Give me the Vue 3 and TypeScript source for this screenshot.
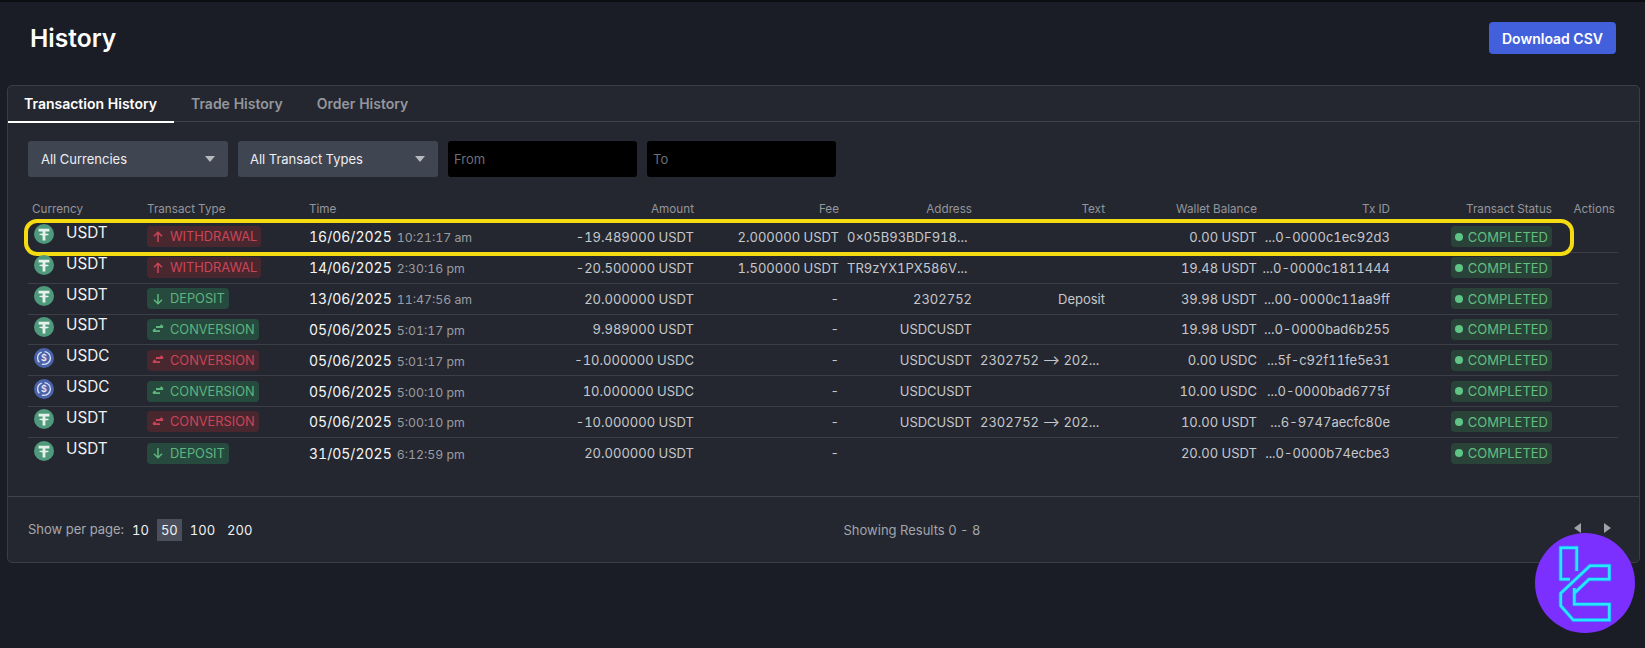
<script setup lang="ts">
type Row = {
  coin: 'USDT' | 'USDC'
  kind: 'WITHDRAWAL' | 'DEPOSIT' | 'CONVERSION'
  tone: 'red' | 'green'
  date: string
  time: string
  amount: string
  fee: string
  address: string
  addressLeft?: boolean
  text: string
  textLeft?: boolean
  balance: string
  tx: string
}
const rows: Row[] = [
  { coin: 'USDT', kind: 'WITHDRAWAL', tone: 'red', date: '16/06/2025', time: '10:21:17 am', amount: '-19.489000 USDT', fee: '2.000000 USDT', address: '0×05B93BDF918...', addressLeft: true, text: '', balance: '0.00 USDT', tx: '...0-0000c1ec92d3' },
  { coin: 'USDT', kind: 'WITHDRAWAL', tone: 'red', date: '14/06/2025', time: '2:30:16 pm', amount: '-20.500000 USDT', fee: '1.500000 USDT', address: 'TR9zYX1PX586V...', addressLeft: true, text: '', balance: '19.48 USDT', tx: '...0-0000c1811444' },
  { coin: 'USDT', kind: 'DEPOSIT', tone: 'green', date: '13/06/2025', time: '11:47:56 am', amount: '20.000000 USDT', fee: '-', address: '2302752', text: 'Deposit', balance: '39.98 USDT', tx: '...00-0000c11aa9ff' },
  { coin: 'USDT', kind: 'CONVERSION', tone: 'green', date: '05/06/2025', time: '5:01:17 pm', amount: '9.989000 USDT', fee: '-', address: 'USDCUSDT', text: '', balance: '19.98 USDT', tx: '...0-0000bad6b255' },
  { coin: 'USDC', kind: 'CONVERSION', tone: 'red', date: '05/06/2025', time: '5:01:17 pm', amount: '-10.000000 USDC', fee: '-', address: 'USDCUSDT', text: '2302752 ⟶ 202...', textLeft: true, balance: '0.00 USDC', tx: '...5f-c92f11fe5e31' },
  { coin: 'USDC', kind: 'CONVERSION', tone: 'green', date: '05/06/2025', time: '5:00:10 pm', amount: '10.000000 USDC', fee: '-', address: 'USDCUSDT', text: '', balance: '10.00 USDC', tx: '...0-0000bad6775f' },
  { coin: 'USDT', kind: 'CONVERSION', tone: 'red', date: '05/06/2025', time: '5:00:10 pm', amount: '-10.000000 USDT', fee: '-', address: 'USDCUSDT', text: '2302752 ⟶ 202...', textLeft: true, balance: '10.00 USDT', tx: '...6-9747aecfc80e' },
  { coin: 'USDT', kind: 'DEPOSIT', tone: 'green', date: '31/05/2025', time: '6:12:59 pm', amount: '20.000000 USDT', fee: '-', address: '', text: '', balance: '20.00 USDT', tx: '...0-0000b74ecbe3' },
]
const headers = ['Currency', 'Transact Type', 'Time', 'Amount', 'Fee', 'Address', 'Text', 'Wallet Balance', 'Tx ID', 'Transact Status', 'Actions']
const pageSizes = [10, 50, 100, 200]
const logoPaths = [
  'M35 46.3H25.7V14.7H41.7V38',
  'M39.3 60.3 54 46.3H74.3V32.7H55L25.7 60.3V72.7L38.3 87H74.3V71.3H39.3V55',
]
</script>

<template>
  <div class="page">
    <header class="top">
      <h1 class="title">History</h1>
      <button class="download">Download CSV</button>
    </header>

    <section class="card">
      <nav class="tabs">
        <span class="tab active">Transaction History</span>
        <span class="tab">Trade History</span>
        <span class="tab">Order History</span>
      </nav>

      <div class="filters">
        <div class="select">All Currencies<i class="caret"></i></div>
        <div class="select second">All Transact Types<i class="caret"></i></div>
        <div class="date">From</div>
        <div class="date">To</div>
      </div>

      <div class="table">
        <div class="grid head">
          <span v-for="(h, i) in headers" :key="h" :class="{ right: i > 2, first: i === 0 }">{{ h }}</span>
        </div>
        <div v-for="(r, i) in rows" :key="i" class="grid row">
          <div class="coin">
            <svg v-if="r.coin === 'USDT'" class="coin-icon" viewBox="0 0 20 20">
              <circle cx="10" cy="10" r="10" fill="#4f9a7c" />
              <path d="M4.6 4.8h10.8v2.6h-4v2.1c1.9.1 3.4.5 3.4 1s-1.5.9-3.4 1v5h-2.8v-5c-1.9-.1-3.4-.5-3.4-1s1.5-.9 3.4-1V7.4h-4z" fill="#e6f1ec" />
            </svg>
            <svg v-else class="coin-icon" viewBox="0 0 20 20">
              <circle cx="10" cy="10" r="10" fill="#4a63ad" />
              <circle cx="10" cy="10" r="6.4" fill="none" stroke="#dfe4f3" stroke-width="1.3" stroke-dasharray="12 3" />
              <text x="10" y="13" text-anchor="middle" class="dollar">$</text>
            </svg>
            <span>{{ r.coin }}</span>
          </div>
          <div>
            <span class="badge" :class="r.tone">
              <svg v-if="r.kind === 'WITHDRAWAL'" class="badge-icon" viewBox="0 0 14 14"><path d="M7 12V2.5M3 6.3l4-4 4 4" /></svg>
              <svg v-else-if="r.kind === 'DEPOSIT'" class="badge-icon" viewBox="0 0 14 14"><path d="M7 2v9.5M3 7.7l4 4 4-4" /></svg>
              <svg v-else class="badge-icon swap" viewBox="0 0 14 14"><path d="M5 5h7M9.6 2.8 12 5M9 9.2H2M4.4 7 2 9.2" /></svg>
              {{ r.kind }}
            </span>
          </div>
          <div class="when"><span class="date-text">{{ r.date }}</span><span class="time-text">{{ r.time }}</span></div>
          <div class="right cell">{{ r.amount }}</div>
          <div class="right cell">{{ r.fee }}</div>
          <div class="cell" :class="r.addressLeft ? 'pad' : 'right'">{{ r.address }}</div>
          <div class="cell" :class="r.textLeft ? 'pad' : 'right'">{{ r.text }}</div>
          <div class="right cell">{{ r.balance }}</div>
          <div class="right cell">{{ r.tx }}</div>
          <div class="right">
            <span class="badge status"><i class="dot"></i>COMPLETED</span>
          </div>
          <div></div>
          <div v-if="i === 0" class="highlight"></div>
        </div>
      </div>

      <footer class="footer">
        <div class="per-page">
          <span class="per-label">Show per page:</span>
          <span v-for="s in pageSizes" :key="s" class="size" :class="{ current: s === 50 }">{{ s }}</span>
        </div>
        <div class="results">Showing Results 0 - 8</div>
        <div class="pager"><i class="prev"></i><i class="next"></i></div>
      </footer>
    </section>

    <svg class="brand" viewBox="0 0 100 100">
      <circle cx="50" cy="50" r="50" fill="#7b30ff" />
      <path v-for="d in logoPaths" :key="d" :d="d" fill="none" stroke="#3a7dff" stroke-width="4" />
      <path v-for="d in logoPaths" :key="d + 'c'" :d="d" fill="none" stroke="#25eaff" stroke-width="2.6" />
    </svg>
  </div>
</template>

<style>
html, body { margin: 0; background: #1a1d26; }
</style>

<style scoped>
.page {
  position: relative;
  box-sizing: border-box;
  width: 1645px;
  height: 648px;
  padding: 2px 5px 0 7px;
  overflow: hidden;
  background: #1a1d26;
  border-top: 2px solid #0c0d11;
  font-family: Inter, "Noto Sans", sans-serif;
  font-variant-numeric: tabular-nums;
  color: #c6c8cd;
}
.top {
  box-sizing: border-box;
  display: flex;
  align-items: center;
  justify-content: space-between;
  height: 81px;
  padding: 0 24px 13px 23px;
}
.title { margin: 0; font-size: 24.6px; font-weight: 600; color: #fff; }
.download {
  width: 127px;
  height: 32px;
  border: 0;
  border-radius: 4px;
  background: #4360dc;
  color: #fff;
  font: 600 14px Inter, sans-serif;
}
.card {
  box-sizing: border-box;
  height: 478px;
  border: 1px solid #3a3d45;
  border-radius: 5px;
  background: #24272f;
}
.tabs { display: flex; height: 35px; border-bottom: 1px solid #3f424a; }
.tab {
  padding: 0 17px;
  font-size: 14px;
  font-weight: 600;
  line-height: 35px;
  color: #94969d;
}
.tab.active { padding: 0 17px 0 16px; color: #fff; border-bottom: 2px solid #fff; height: 35px; }
.filters { display: flex; gap: 10px; padding: 19px 20px 0; }
.select {
  position: relative;
  box-sizing: border-box;
  width: 200px;
  height: 36px;
  padding: 0 13px;
  border-radius: 3px;
  background: #404552;
  color: #eceef1;
  font-size: 13px;
  line-height: 37px;
}
.select.second { padding-left: 12px; }
.caret {
  position: absolute;
  right: 13px;
  top: 15px;
  border: 5px solid transparent;
  border-top: 6px solid #b6b9c0;
  border-bottom: 0;
}
.date {
  box-sizing: border-box;
  width: 189px;
  height: 36px;
  padding: 0 6px;
  border-radius: 3px;
  background: #000;
  color: #6d6f75;
  font-size: 13px;
  line-height: 37px;
}
.table { margin-top: 19px; height: 300px; padding-left: 20px; }
.grid {
  display: grid;
  grid-template-columns: 119px 162px 200px 185px 145px 133px 133px 152px 133px 162px 63px;
  align-items: center;
  width: 1590px;
}
.head { height: 26px; font-size: 11.7px; color: #93959c; }
.first { padding-left: 4px; }
.row {
  position: relative;
  height: 30.85px;
  box-sizing: border-box;
  border-bottom: 1px solid #3b3e46;
  font-size: 13px;
}
.row:last-child { border-bottom: 0; }
.right { text-align: right; }
.cell { white-space: nowrap; }
.pad { padding-left: 8px; }
.coin {
  display: flex;
  align-items: center;
  gap: 12px;
  padding-left: 6px;
  margin-top: -5px;
  font-size: 15.3px;
  color: #f1f2f4;
}
.coin span { margin-top: -4px; }
.coin-icon { width: 20px; height: 20px; flex: none; }
.dollar { font: 600 9px Inter, sans-serif; fill: #e6ebf7; }
.badge {
  display: inline-flex;
  align-items: center;
  gap: 5px;
  box-sizing: border-box;
  height: 21px;
  padding: 0 4px;
  border-radius: 4px;
  font-size: 12.8px;
  white-space: nowrap;
  vertical-align: middle;
}
.badge-icon {
  width: 14px;
  height: 14px;
  fill: none;
  stroke: currentColor;
  stroke-width: 1.5;
}
.badge-icon.swap { stroke-width: 1.8; }
.badge.red { background: #49272f; color: #cb4558; }
.badge.green { background: #264a3e; color: #5fb57f; }
.badge.status { background: #2a4338; color: #62bf80; font-size: 13px; }
.dot {
  width: 8px;
  height: 8px;
  border-radius: 50%;
  background: #5fc485;
}
.when { display: flex; align-items: baseline; gap: 5px; white-space: nowrap; }
.date-text { font-size: 14px; color: #f4f5f6; }
.time-text { font-size: 12.3px; color: #9a9ca3; }
.highlight {
  position: absolute;
  left: -4px;
  top: -3px;
  width: 1550px;
  height: 37px;
  box-sizing: border-box;
  border: 4px solid #f5dc12;
  border-radius: 13px;
}
.footer {
  display: grid;
  grid-template-columns: 768px 232px 1fr;
  align-items: center;
  height: 66px;
  padding: 0 20px;
  border-top: 1px solid #3f424a;
}
.per-page { display: flex; align-items: center; gap: 4px; }
.per-label { margin: -2px 0 0; font-size: 13px; color: #a6a8ae; }
.size {
  padding: 3px 4px;
  font-size: 13px;
  color: #f0f1f3;
}
.size.current { background: #4a4f5b; }
.results { text-align: center; font-size: 13px; color: #a3a5ab; }
.pager { display: flex; justify-content: flex-end; gap: 23px; padding-right: 8px; margin-top: -5px; }
.prev, .next {
  border-top: 5px solid transparent;
  border-bottom: 5px solid transparent;
}
.prev { border-right: 7px solid #a0a2a8; }
.next { border-left: 7px solid #a0a2a8; }
.brand {
  position: absolute;
  left: 1535px;
  top: 531px;
  width: 100px;
  height: 100px;
}
</style>
